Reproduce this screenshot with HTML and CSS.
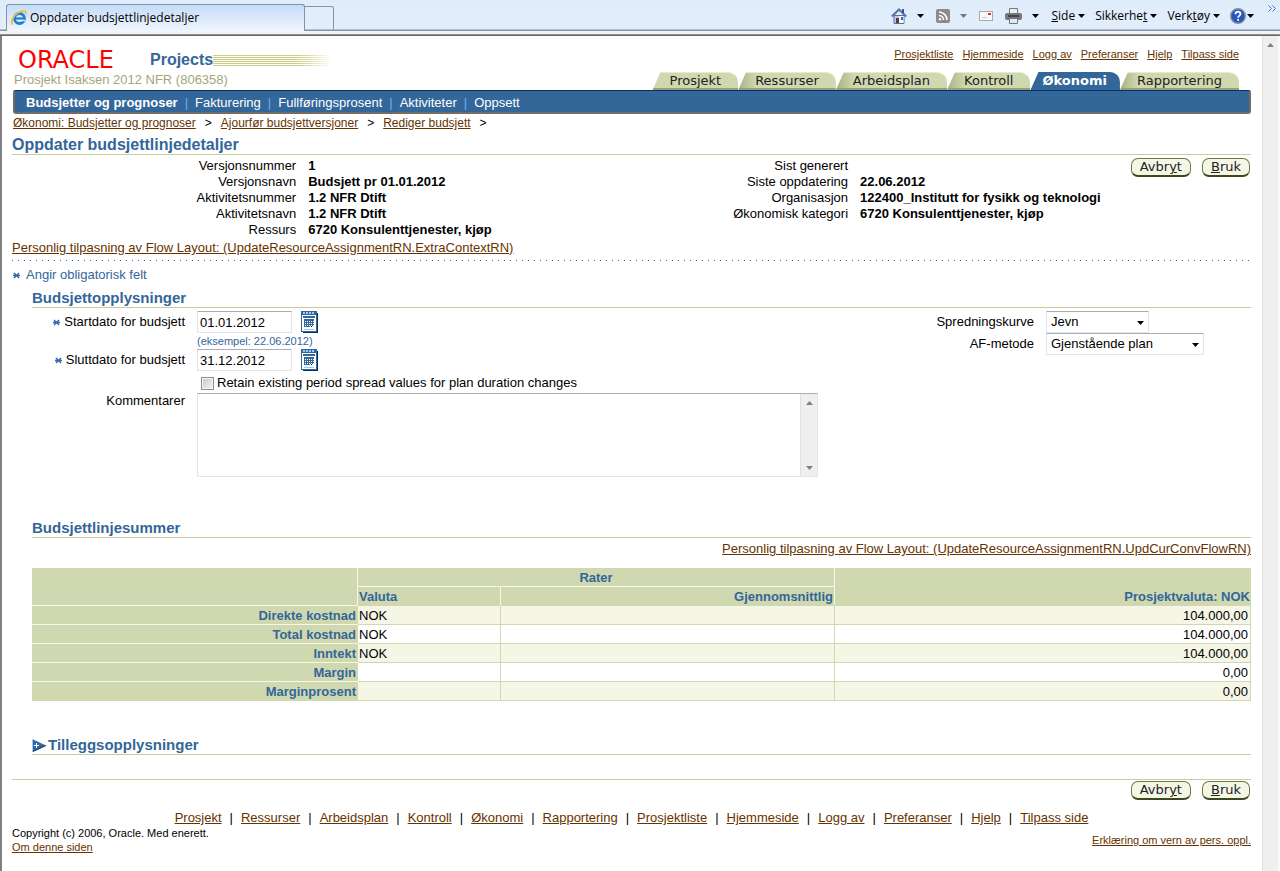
FILE: index.html
```html
<!DOCTYPE html>
<html lang="no">
<head>
<meta charset="utf-8">
<title>Oppdater budsjettlinjedetaljer</title>
<link rel="stylesheet" href="styles.css">
</head>
<body>
<svg class="defs" aria-hidden="true">
  <symbol id="caret" viewBox="0 0 7 4"><path d="M0 0h7L3.500 4z"/></symbol>
  <symbol id="cal" viewBox="0 0 17 22">
    <path fill="#003366" d="M2 2h15v20H2z"/><path fill="#336699" d="M0 0h16v21H0z"/>
    <path fill="#fff" d="M1 4h14v16H1z"/>
    <path stroke="#99ccff" stroke-width="2" stroke-dasharray="2 1" d="M2 2h12"/>
    <path fill="#336699" d="M2 5h12v2H2zM3 8h10v8H3z"/>
    <path stroke="#fff" stroke-dasharray="1 1" d="M4 10.500h9M4 12.500h9M4 14.500h9"/>
    <path fill="#fff" d="M9 15h4v2H9z"/><path fill="#000" d="M10 15h1v1h-1z"/><path fill="#99ccff" d="M3 18h10v1H3z"/>
  </symbol>
  <symbol id="req" viewBox="0 0 7 7"><path stroke="#3366aa" stroke-width="1.400" d="M0 3.500h7M1 1l5 5M6 1L1 6"/></symbol>
</svg>

<header class="browser">
  <div class="browser-tab">
    <svg width="16" height="16" viewBox="0 0 16 16"><circle cx="8.500" cy="8.500" r="5" fill="none" stroke="#1c7fd6" stroke-width="2.800"/><path d="M4 8.500h10" stroke="#1c7fd6" stroke-width="2.200"/><path d="M10.500 10.500h4" stroke="#dbeafd" stroke-width="1.500"/><path d="M1.500 14.500C-1 12 3 4 10 1.500c4-1.300 5.500 0 4.500 2.500" fill="none" stroke="#f0b429" stroke-width="1.600"/></svg>
    <span>Oppdater budsjettlinjedetaljer</span>
  </div>
  <button class="new-tab" aria-label="Ny fane"></button>
  <div class="commands">
    <button aria-label="Hjem"><svg width="16" height="16" viewBox="0 0 16 16"><path fill="#b7cdf0" stroke="#5a6f96" d="M3 7.500h10v8H3z"/><path fill="#f4f8ff" d="M8 8h4.500v7H8z"/><path fill="none" stroke="#5672a8" stroke-width="2" d="M.8 8.500L8 1.500l7.200 7"/><path fill="#39558f" d="M11 1h2v4h-2z"/><path fill="#5b3c33" d="M5 10h3v5H5z"/><path fill="#3665c0" d="M10 9h2v3h-2z"/></svg></button>
    <button aria-label="Hjem, valg" class="drop"><svg class="caret"><use href="#caret"/></svg></button>
    <button aria-label="Feeder"><svg width="14" height="14" viewBox="0 0 14 14"><rect width="14" height="14" rx="2" fill="#8b8b8b"/><g fill="none" stroke="#fff" stroke-width="1.600"><path d="M3 6.500a4.500 4.500 0 0 1 4.500 4.500M3 3a8 8 0 0 1 8 8"/></g><circle cx="4" cy="10.200" r="1.300" fill="#fff"/></svg></button>
    <button aria-label="Feeder, valg" class="drop dim"><svg class="caret"><use href="#caret"/></svg></button>
    <button aria-label="Les e-post"><svg width="14" height="10" viewBox="0 0 14 10"><rect x=".5" y=".5" width="13" height="9" fill="#f8f8f8" stroke="#aaa"/><path fill="#d33" d="M9 2h3v2H9z"/><path stroke="#ccc" d="M3 6.500h5"/></svg></button>
    <button aria-label="Skriv ut"><svg width="17" height="16" viewBox="0 0 17 16"><path fill="#e9eef4" stroke="#777" d="M4.500.5h8v6h-8z"/><rect y="5" width="17" height="7" rx="2" fill="#777"/><path fill="#444" d="M3 7h11v2H3z"/><path fill="#dceafd" stroke="#777" d="M4.500 10.500h8v5h-8z"/></svg></button>
    <button aria-label="Skriv ut, valg" class="drop"><svg class="caret"><use href="#caret"/></svg></button>
    <button class="menu"><span><u>S</u>ide</span><svg class="caret"><use href="#caret"/></svg></button>
    <button class="menu"><span>Sikkerhe<u>t</u></span><svg class="caret"><use href="#caret"/></svg></button>
    <button class="menu"><span>Verk<u>t</u>øy</span><svg class="caret"><use href="#caret"/></svg></button>
    <button class="menu help" aria-label="Hjelp"><svg width="16" height="16" viewBox="0 0 16 16"><circle cx="8" cy="8" r="7.300" fill="#2a56b8" stroke="#7d8fae" stroke-width="1.400"/><path fill="none" stroke="#fff" stroke-width="1.800" d="M5.500 6.300c0-3.500 5-3.300 5-.5 0 1.800-2.400 1.800-2.400 4M8.100 11v1.800"/></svg><svg class="caret"><use href="#caret"/></svg></button>
    <button class="more" aria-label="Mer"><svg width="8" height="7" viewBox="0 0 8 7"><path fill="none" stroke="#4f74b8" d="M.5.5l3 3-3 3M4.500.5l3 3-3 3"/></svg></button>
  </div>
</header>

<div class="viewport">
<div class="page">
  <div class="masthead">
    <div class="branding">
      <div class="brand"><span class="oracle">ORACLE</span><span class="product">Projects</span><span class="stripes"></span></div>
      <div class="project">Prosjekt Isaksen 2012 NFR (806358)</div>
    </div>
    <div class="masthead-nav">
      <nav class="global-links"><a href="#">Prosjektliste</a><a href="#">Hjemmeside</a><a href="#">Logg av</a><a href="#">Preferanser</a><a href="#">Hjelp</a><a href="#">Tilpass side</a></nav>
      <nav class="tabs"><a href="#">Prosjekt</a><a href="#">Ressurser</a><a href="#">Arbeidsplan</a><a href="#">Kontroll</a><a href="#" class="active">Økonomi</a><a href="#">Rapportering</a></nav>
    </div>
  </div>
  <nav class="subnav"><a href="#" class="current">Budsjetter og prognoser</a><i>|</i><a href="#">Fakturering</a><i>|</i><a href="#">Fullføringsprosent</a><i>|</i><a href="#">Aktiviteter</a><i>|</i><a href="#">Oppsett</a></nav>
  <nav class="crumbs"><a href="#">Økonomi: Budsjetter og prognoser</a><span>&gt;</span><a href="#">Ajourfør budsjettversjoner</a><span>&gt;</span><a href="#">Rediger budsjett</a><span>&gt;</span></nav>

  <main>
    <h1>Oppdater budsjettlinjedetaljer</h1>
    <section class="context">
      <dl>
        <dt>Versjonsnummer</dt><dd>1</dd>
        <dt>Versjonsnavn</dt><dd>Budsjett pr 01.01.2012</dd>
        <dt>Aktivitetsnummer</dt><dd>1.2 NFR Dtift</dd>
        <dt>Aktivitetsnavn</dt><dd>1.2 NFR Dtift</dd>
        <dt>Ressurs</dt><dd>6720 Konsulenttjenester, kjøp</dd>
      </dl>
      <dl>
        <dt>Sist generert</dt><dd></dd>
        <dt>Siste oppdatering</dt><dd>22.06.2012</dd>
        <dt>Organisasjon</dt><dd>122400_Institutt for fysikk og teknologi</dd>
        <dt>Økonomisk kategori</dt><dd>6720 Konsulenttjenester, kjøp</dd>
      </dl>
      <div class="actions"><button class="pill">Avbr<u>y</u>t</button><button class="pill"><u>B</u>ruk</button></div>
    </section>
    <a class="personalize" href="#">Personlig tilpasning av Flow Layout: (UpdateResourceAssignmentRN.ExtraContextRN)</a>
    <div class="dots"></div>
    <p class="required-note"><svg class="req"><use href="#req"/></svg>Angir obligatorisk felt</p>

    <section class="block">
      <h2>Budsjettopplysninger</h2>
      <form class="details">
        <div class="fields">
          <label for="start"><svg class="req"><use href="#req"/></svg>Startdato for budsjett</label>
          <div class="date"><input id="start" type="text" value="01.01.2012"><button type="button" aria-label="Velg startdato"><svg width="17" height="22"><use href="#cal"/></svg></button></div>
          <small>(eksempel: 22.06.2012)</small>
          <label for="end"><svg class="req"><use href="#req"/></svg>Sluttdato for budsjett</label>
          <div class="date"><input id="end" type="text" value="31.12.2012"><button type="button" aria-label="Velg sluttdato"><svg width="17" height="22"><use href="#cal"/></svg></button></div>
          <div class="check"><input id="retain" type="checkbox"><label for="retain">Retain existing period spread values for plan duration changes</label></div>
          <label for="comments" class="top">Kommentarer</label>
          <div class="comments"><textarea id="comments"></textarea><div class="scroll"><svg class="caret up"><use href="#caret"/></svg><svg class="caret"><use href="#caret"/></svg></div></div>
        </div>
        <div class="options">
          <label for="curve">Spredningskurve</label>
          <div class="select short"><select id="curve"><option>Jevn</option></select><svg class="caret"><use href="#caret"/></svg></div>
          <label for="method">AF-metode</label>
          <div class="select long"><select id="method"><option>Gjenstående plan</option></select><svg class="caret"><use href="#caret"/></svg></div>
        </div>
      </form>
    </section>

    <section class="block sums">
      <h2>Budsjettlinjesummer</h2>
      <a class="personalize end" href="#">Personlig tilpasning av Flow Layout: (UpdateResourceAssignmentRN.UpdCurConvFlowRN)</a>
      <table>
        <colgroup><col class="c-name"><col class="c-currency"><col class="c-average"><col></colgroup>
        <thead>
          <tr><td rowspan="2"></td><th colspan="2" class="center">Rater</th><th rowspan="2">Prosjektvaluta: NOK</th></tr>
          <tr><th class="left">Valuta</th><th>Gjennomsnittlig</th></tr>
        </thead>
        <tbody>
          <tr><th scope="row">Direkte kostnad</th><td>NOK</td><td></td><td>104.000,00</td></tr>
          <tr><th scope="row">Total kostnad</th><td>NOK</td><td></td><td>104.000,00</td></tr>
          <tr><th scope="row">Inntekt</th><td>NOK</td><td></td><td>104.000,00</td></tr>
          <tr><th scope="row">Margin</th><td></td><td></td><td>0,00</td></tr>
          <tr><th scope="row">Marginprosent</th><td></td><td></td><td>0,00</td></tr>
        </tbody>
      </table>
    </section>

    <section class="block extra">
      <h2><button aria-expanded="false" aria-label="Vis tilleggsopplysninger"><svg width="14" height="13" viewBox="0 0 14 13"><path fill="#336699" d="M0 0l14 6.500L0 13z"/><path fill="#99ccff" d="M0 0h1v13H0z"/><path stroke="#003366" d="M1 12.500l13-6"/><path stroke="#fff" d="M2 6.500h5M4.500 4v5"/></svg></button>Tilleggsopplysninger</h2>
    </section>
  </main>

  <footer>
    <div class="actions"><button class="pill">Avbr<u>y</u>t</button><button class="pill"><u>B</u>ruk</button></div>
    <nav class="footer-links"><a href="#">Prosjekt</a><i>|</i><a href="#">Ressurser</a><i>|</i><a href="#">Arbeidsplan</a><i>|</i><a href="#">Kontroll</a><i>|</i><a href="#">Økonomi</a><i>|</i><a href="#">Rapportering</a><i>|</i><a href="#">Prosjektliste</a><i>|</i><a href="#">Hjemmeside</a><i>|</i><a href="#">Logg av</a><i>|</i><a href="#">Preferanser</a><i>|</i><a href="#">Hjelp</a><i>|</i><a href="#">Tilpass side</a></nav>
    <div class="legal">
      <div><p>Copyright (c) 2006, Oracle. Med enerett.</p><a href="#">Om denne siden</a></div>
      <a href="#">Erklæring om vern av pers. oppl.</a>
    </div>
  </footer>
</div>
<div class="scroll page-scroll"><svg class="caret up"><use href="#caret"/></svg></div>
</div>
</body>
</html>
```
FILE: styles.css
```css
* { box-sizing: border-box; }
body { margin: 0; min-height: 100vh; display: flex; flex-direction: column; background: #fff; color: #000; font: 13px/16px "Liberation Sans", Arial, sans-serif; }
button, input, select, textarea { font: inherit; color: inherit; border-radius: 0; margin: 0; }
button { background: none; border: 0; padding: 0; display: flex; align-items: center; }
p, h1, h2, dl, dd { margin: 0; }
a { color: #663300; }
i { font-style: normal; }
svg { display: block; flex: none; }
.defs { position: absolute; width: 0; height: 0; }
.caret { width: 7px; height: 4px; }
.caret.up { transform: rotate(180deg); }
.req { width: 7px; height: 7px; }

.browser { height: 36px; flex: none; display: flex; align-items: flex-end; padding: 0 4px 5px 6px; background: linear-gradient(#dfecfa, #e3eefb 29px, #8592aa 30px, #8592aa 31px, #f0f5fc 31px, #f0f5fc 34px, #b0b4ba 34px, #696969 35px); font: 12px/16px "Open Sans", "Noto Sans", sans-serif; }
.browser-tab { width: 299px; height: 27px; display: flex; align-items: center; gap: 3px; padding: 0 4px; border: 1px solid #8592aa; border-bottom: 0; border-radius: 3px 3px 0 0; background: linear-gradient(#c4dcf8, #f0f5fc); }
.new-tab { width: 29px; height: 25px; border: 1px solid #8592aa; border-left: 0; border-radius: 0 3px 0 0; }
.commands { flex: 1; height: 30px; display: flex; justify-content: flex-end; align-items: center; }
.commands .drop { padding: 0 12px 0 10px; }
.commands .dim { fill: #777; }
.commands [aria-label="Skriv ut"] { margin-left: 12px; }
.menu { gap: 3px; margin-right: 10px; }
.menu.help { margin-right: 14px; gap: 1px; }
.more { align-self: flex-start; padding-top: 4px; }

.viewport { flex: 1; display: flex; border-left: 2px solid #808080; }
.page { flex: 1; min-width: 0; padding: 0 11px 0 10px; }
.scroll { display: flex; flex-direction: column; justify-content: space-between; align-items: center; width: 17px; padding: 7px 0 6px; background: #efefef; border-left: 1px solid #e0e0e0; fill: #808080; }
.page-scroll { width: 18px; border-right: 2px solid #fafafa; }

.masthead { display: flex; justify-content: space-between; height: 54px; padding-right: 12px; }
.branding { padding: 14px 0 0 2px; }
.brand { display: flex; align-items: center; height: 20px; padding-left: 4px; }
.oracle { width: 132px; color: #f00; font: 24px/20px "DejaVu Sans", sans-serif; }
.product { color: #336699; font-size: 16px; font-weight: bold; }
.stripes { width: 119px; height: 11px; background: repeating-linear-gradient(#cccc80 0 1px, #fff 1px 2px); mask-image: linear-gradient(90deg, #000 70%, transparent); }
.project { color: #a5a57b; line-height: 16px; padding-top: 2px; }
.masthead-nav { display: flex; flex-direction: column; justify-content: space-between; align-items: flex-end; padding-top: 10px; }
.global-links { display: flex; gap: 9px; font-size: 11px; }
.tabs { display: flex; font: 13px/16px "DejaVu Sans", sans-serif; }
.tabs a { padding: 0 17px; color: #222; text-decoration: none; height: 18px; border-top: 1px solid #e6ebc8; border-bottom: 2px solid #99a077; border-top-right-radius: 10px; background: linear-gradient(90deg, #a9b088, #d0d8b0 18px); clip-path: polygon(8px 0, 100% 0, 100% 100%, 0 100%); }
.tabs a:first-child { background: #d0d8b0; }
.tabs .active { padding: 0 13px 0 12px; color: #fff; font-weight: bold; background: #336699; border-color: #336699; }
.subnav { display: flex; align-items: center; height: 24px; margin-left: 1px; padding: 2px 11px 0; color: #fff; background: #336699; border: 2px solid #716d66; border-top: 1px solid #003366; border-radius: 2px 2px 3px 3px; }
.subnav a { color: #fff; text-decoration: none; }
.subnav .current { font-weight: bold; }
.subnav i { color: #6cb3f0; padding: 0 7px; }
.crumbs { display: flex; gap: 9px; height: 18px; padding-left: 1px; font-size: 12px; line-height: 18px; }

h1, h2 { color: #336699; border-bottom: 1px solid #cccc99; line-height: 18px; }
h1 { font-size: 16px; padding-top: 4px; }
h2 { font-size: 15px; }
.context { display: flex; min-height: 85px; padding-top: 3px; }
.context dl { flex: 1; display: grid; grid-template-columns: 51.5% 1fr; grid-auto-rows: 16px; column-gap: 12px; white-space: nowrap; }
.context dt { text-align: right; }
.context dd { font-weight: bold; }
.actions { display: flex; align-items: flex-start; justify-content: flex-end; gap: 11px; padding: 0 1px 0 15px; }
.pill { padding: 0 8px; height: 19px; color: #222; font: 13px/16px "DejaVu Sans", sans-serif; background: #f5f6e6; border: 1px solid #6b7a45; border-bottom: 2px solid #3b4a1c; border-radius: 7px; }
.personalize { display: table; }
.personalize.end { margin: 3px 0 11px auto; }
.dots { height: 1px; margin: 4px 0 6px; background: repeating-linear-gradient(90deg, #336699 0 1px, transparent 1px 6px); }
.required-note { display: flex; align-items: center; gap: 6px; padding-left: 1px; color: #336699; }
.block { margin: 6px 0 0 20px; }

.details { display: flex; justify-content: space-between; padding-top: 3px; }
.fields { display: grid; grid-template-columns: 153px 1fr; column-gap: 12px; align-items: center; width: 64.5%; }
.fields > label { display: flex; align-items: center; justify-content: flex-end; gap: 4px; }
.fields .top { align-self: start; }
.fields small, .fields .check { grid-column: 2; }
.date { display: flex; gap: 9px; }
input[type="text"] { width: 95px; height: 22px; padding: 0 2px; border: 1px solid #e0e4ec; border-top-color: #abadb3; }
small { font-size: 11px; line-height: 16px; color: #336699; }
.check { display: flex; align-items: center; gap: 3px; padding: 4px 4px 2px; }
input[type="checkbox"] { appearance: none; width: 13px; height: 13px; border: 1px solid #8e8f8f; background: linear-gradient(135deg, #c4c8d0, #f6f6f6); box-shadow: inset 0 0 0 1px #f4f4f4; }
.comments { display: flex; width: 100%; height: 84px; border: 1px solid #e0e4ec; border-top-color: #abadb3; }
textarea { flex: 1; border: 0; resize: none; overflow: hidden; }
.options { display: grid; grid-template-columns: auto 205px; column-gap: 12px; align-content: start; align-items: center; text-align: right; }
.select { position: relative; height: 22px; }
.select.short { width: 103px; }
.select.long { width: 158px; }
select { appearance: none; display: block; width: 100%; height: 22px; padding: 0 4px; background: #fff; border: 1px solid #e0e4ec; border-top-color: #abadb3; }
.select .caret { position: absolute; right: 5px; top: 10px; }

.sums { margin-top: 42px; }
table { width: 100%; table-layout: fixed; border-collapse: separate; border-spacing: 0; line-height: 16px; }
.c-name { width: 326px; }
.c-currency { width: 143px; }
.c-average { width: 334px; }
th, td { height: 19px; padding: 2px 1px 0; border: 0 solid #f7f7e7; }
th, thead td { color: #336699; background: #d0d8b0; text-align: right; vertical-align: bottom; }
thead th, thead td { border-width: 0 1px 1px 0; }
thead tr:first-child > :last-child { border-right: 0; }
thead tr:first-child > th:last-child, thead tr:last-child th { border-bottom-color: #d0d8b0; }
.left { text-align: left; }
.center { text-align: center; }
tbody th { border-bottom-width: 1px; padding-right: 2px; }
tbody tr:last-child th { border-color: #d0d8b0; }
tbody td { border-color: #d0d8b0; border-width: 0 1px 1px 0; }
tbody td:last-child { text-align: right; padding-right: 2px; }
tbody tr:nth-child(odd) td { background: #f5f6e6; }

.extra { margin-top: 35px; }
.extra h2 { display: flex; align-items: center; gap: 2px; }

footer { margin-top: 24px; padding-top: 1px; border-top: 1px solid #cccc99; }
footer .actions { padding-bottom: 10px; }
.footer-links { display: flex; justify-content: center; gap: 8px; }
.legal { display: flex; justify-content: space-between; align-items: center; font-size: 11px; line-height: 14px; }
```
